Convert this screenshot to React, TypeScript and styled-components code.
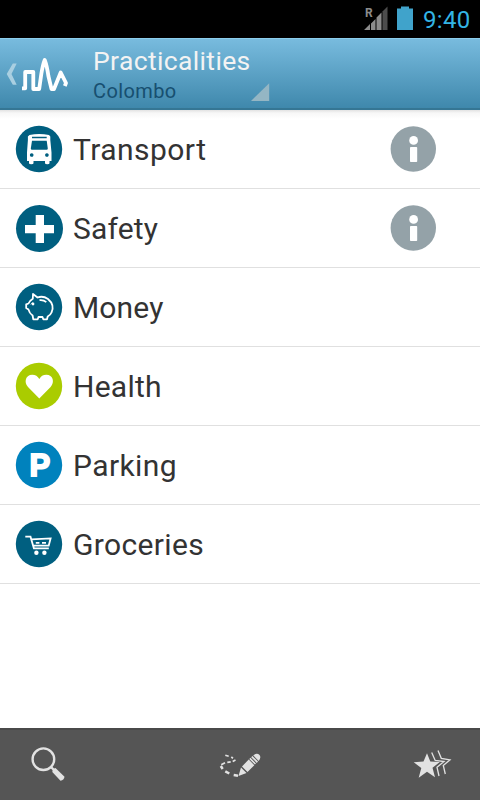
import React from "react";
import styled, { createGlobalStyle } from "styled-components";

const GlobalStyle = createGlobalStyle`
  * { box-sizing: border-box; }
  body { margin: 0; background: #fff; }
  svg { display: block; flex: none; }
`;

const Screen = styled.div`
  width: 480px;
  height: 800px;
  display: flex;
  flex-direction: column;
  overflow: hidden;
  background: #fff;
  font-family: Roboto, sans-serif;
`;

const StatusBar = styled.div`
  height: 38px;
  flex: none;
  display: flex;
  justify-content: flex-end;
  background: #000;
`;

const Clock = styled.span`
  width: 57px;
  padding-top: 5px;
  font-size: 24px;
  line-height: 30px;
  letter-spacing: 0.3px;
  color: #33b5e5;
`;

const ActionBar = styled.header`
  height: 72px;
  flex: none;
  display: flex;
  background: linear-gradient(#78bbde, #3f88ac);
  border-top: 1px solid #8ccdec;
  border-bottom: 2px solid #357694;
`;

const Titles = styled.div`
  width: 158px;
  display: flex;
  flex-direction: column;
`;

const Title = styled.h1`
  margin: 6px 0 0;
  font-size: 26.5px;
  line-height: 32px;
  font-weight: 400;
  letter-spacing: 0.36px;
  white-space: nowrap;
  color: #f3f3f3;
`;

const Subtitle = styled.div`
  margin-top: 1px;
  font-size: 20px;
  line-height: 26px;
  letter-spacing: 0.4px;
  color: #174f70;
`;

const List = styled.main`
  flex: 1;
  display: flex;
  flex-direction: column;
  background: linear-gradient(#e2e2e2, #f7f7f7 3px, #fff 9px);
`;

const Row = styled.div`
  height: 79px;
  flex: none;
  display: flex;
  align-items: center;
  padding: 0 43px 0 15px;
  border-bottom: 1px solid #e0e0e0;
`;

const Label = styled.span<{ $spacing: number }>`
  flex: 1;
  margin-left: 10px;
  padding-top: 2px;
  font-size: 30px;
  line-height: 36px;
  letter-spacing: ${(p) => p.$spacing}px;
  color: #333;
`;

const Toolbar = styled.footer`
  height: 72px;
  flex: none;
  display: flex;
  justify-content: space-between;
  background: #555;
  border-top: 2px solid #4a4a4a;
`;

const BadgeLetter = styled.text`
  font: 700 31px "Liberation Sans", sans-serif;
  fill: #fff;
  stroke: #fff;
  stroke-width: 1.8;
`;

const SignalLetter = styled.text`
  font: 700 12px Roboto, sans-serif;
  fill: #8c8c8c;
`;

const SignalIcon = () => (
  <svg width="34" height="38" viewBox="359 0 34 38">
    <SignalLetter x="365" y="17">R</SignalLetter>
    <path d="M364 30 L370 24 V30Z M371 23.5 L375.5 19 V30 H371Z M376.5 17.5 L381.5 12.5 V30 H376.5Z" fill="#8c8c8c" />
    <path d="M382.5 11.5 L387.5 6.5 V30 H382.5Z" fill="#4c4c4c" />
  </svg>
);

const BatteryIcon = () => (
  <svg width="30" height="38" viewBox="393 0 30 38">
    <path d="M401 6.5h8v2h4V30h-16V8.500h4z" fill="#40a3cb" />
  </svg>
);

const UpAndLogo = () => (
  <svg width="93" height="69" viewBox="0 39 93 69">
    <path d="M12.800 63.500H16.700L11.500 74L16.700 84.700H12.800L6.700 74Z" fill="#a9cfe1" />
    <path
      d="M22 88.300H25.200V72H33.300V89H39.200L41.300 74Q43 64 44.700 60Q47 66 48.400 76L51.500 89H54L60.700 72.500L66 83L64.800 86"
      fill="none"
      stroke="#fff"
      strokeWidth="3.800"
      strokeLinejoin="round"
    />
  </svg>
);

const SpinnerCorner = () => (
  <svg width="20" height="69" viewBox="251 39 20 69">
    <path d="M269.200 83.200V101H251Z" fill="#94b6c4" />
  </svg>
);

const BusArt = () => (
  <>
    <circle cx="24" cy="24" r="23.200" fill="#005f80" />
    <path
      fillRule="evenodd"
      fill="#fff"
      d="M14.500 10Q24 8.200 34 10L35.300 11.500V15L36.500 27.500V36H34.500V38.200Q34.500 39.300 32.300 39.300T30 38.200V36H18.500V38.200Q18.500 39.300 16.300 39.300T14 38.200V36H12V27.500L12.900 15V11.500Z M17 11.800V13.300H31.700V11.800Z M17 15.700L15.800 23.500Q15.800 24.800 17 24.800H31.600Q32.800 24.800 32.800 23.500L31.700 15.700Z M16.700 28.200a1.800 1.800 0 1 0 .01 0Z M31.900 28.200a1.800 1.800 0 1 0 .01 0Z"
    />
  </>
);

const CrossArt = () => (
  <>
    <circle cx="24.500" cy="24.500" r="23.500" fill="#005f80" />
    <path d="M20.700 11H29V21H39V29.300H29V39H20.700V29.300H10V21H20.700Z" fill="#fff" />
  </>
);

const PiggyArt = () => (
  <>
    <circle cx="24" cy="24" r="23.200" fill="#005f80" />
    <path
      d="M18 11L22.500 14.500Q28 12.500 33 16Q40 22 36.500 29.500Q35.500 32 32.700 33.500L32 36.300H28.300L27.500 34H23.500L22.700 36.300H18.300L17.600 32.500Q14.500 30.500 13.500 26.600L11.200 25V21.300L13.500 20.500Q14.600 17.500 17.800 15.700Z"
      fill="none"
      stroke="#fff"
      strokeWidth="1.800"
      strokeLinejoin="round"
    />
    <path d="M24.500 17.200Q28.500 16.700 31.300 19.200" fill="none" stroke="#fff" strokeWidth="1.700" />
    <circle cx="18" cy="21" r="1.400" fill="#fff" />
    <path d="M15.800 21.500L17.500 19.500" stroke="#fff" strokeWidth=".8" />
  </>
);

const HeartArt = () => (
  <>
    <circle cx="24" cy="24" r="23.200" fill="#aacc00" />
    <path d="M24.300 36.500L13 25C8.500 20 10.800 12.800 17.200 12.700Q22 12.700 24.300 17Q26.500 12.700 31.300 12.700C38 12.800 40 20 35.600 25Z" fill="#fff" />
  </>
);

const ParkingArt = () => (
  <>
    <circle cx="24" cy="24" r="23.200" fill="#0082bd" />
    <BadgeLetter x="14.600" y="35.100">P</BadgeLetter>
  </>
);

const CartArt = () => (
  <>
    <circle cx="24" cy="24" r="23.200" fill="#005f80" />
    <path d="M10.300 16.700H15.500L18.900 28.300H33.800M16.400 19.400L35.600 18.400L33.700 25.700H18.200" fill="none" stroke="#fff" strokeWidth="1.800" />
    <path d="M20.800 22.800H24.400M27 22.800H31" stroke="#fff" strokeWidth="1.700" />
    <circle cx="21.400" cy="32.700" r="2.200" fill="#fff" />
    <circle cx="29.400" cy="32.700" r="2.200" fill="#fff" />
  </>
);

const InfoIcon = () => (
  <svg width="48" height="48" viewBox="389 125 48 48">
    <circle cx="413.300" cy="149" r="22.700" fill="#94a2a8" />
    <circle cx="413.600" cy="140.400" r="4.400" fill="#fff" />
    <rect x="410" y="147" width="7.200" height="15" rx=".8" fill="#fff" />
  </svg>
);

const SearchIcon = () => (
  <svg width="96" height="70" viewBox="0 730 96 70">
    <circle cx="43.400" cy="759.200" r="10.800" fill="none" stroke="#e2e2e2" strokeWidth="2.400" />
    <path d="M51 767L55 771" stroke="#e2e2e2" strokeWidth="2.400" />
    <path d="M55.500 768L64.500 776.700Q64 780 60.500 780.700L52.300 772Q52.500 768.500 55.500 768Z" fill="#e2e2e2" />
  </svg>
);

const RouteIcon = () => (
  <svg width="96" height="70" viewBox="192 730 96 70">
    <path
      d="M225.300 755.200L228.700 756.200M231.300 757L233 758.200M235.500 760L232.700 761.400M230.700 761.800L227.300 762.300M225 762.700L221.300 764.700"
      fill="none"
      stroke="#e2e2e2"
      strokeWidth="1.700"
    />
    <path d="M220.800 766L222.700 769M225.300 771.300L229.300 773.500M233.700 775L238 775.800" fill="none" stroke="#e2e2e2" strokeWidth="2.500" />
    <path d="M238.500 776L241 767.500L246.500 773Z M242 766.500L248.700 759.500L254.300 765.200L247.500 772Z M249.300 759L250.500 757.800L256 763.500L254.900 764.600Z M251.200 757.200L252.400 756L258 761.600L256.800 762.900Z M253.200 755.300Q257 752.500 259.500 755Q261.500 757.500 258.700 761Z" fill="#e2e2e2" />
  </svg>
);

const FavouritesIcon = () => (
  <svg width="96" height="70" viewBox="384 730 96 70">
    <path d="M427 753.300L430.300 761.600L439.800 762L432.500 767.800L435 777.300L427 771.800L418.700 777.700L421.300 768L413.700 762.300L423.500 761.600Z" fill="#e2e2e2" />
    <path
      d="M431.700 752.500L435.200 760.500L444 761.500L437 767.200L439 776M438 750.500L441.300 758.300L450 759.800L443.300 765.500L445.300 774"
      fill="none"
      stroke="#e2e2e2"
      strokeWidth="1.300"
    />
  </svg>
);

const items = [
  { label: "Transport", Art: BusArt, info: true, spacing: 0.45 },
  { label: "Safety", Art: CrossArt, info: true, spacing: 0.15 },
  { label: "Money", Art: PiggyArt, info: false, spacing: 0.15 },
  { label: "Health", Art: HeartArt, info: false, spacing: 0.25 },
  { label: "Parking", Art: ParkingArt, info: false, spacing: 0.4 },
  { label: "Groceries", Art: CartArt, info: false, spacing: 0.35 },
];

export default function App() {
  return (
    <>
      <GlobalStyle />
      <Screen>
        <StatusBar>
          <SignalIcon />
          <BatteryIcon />
          <Clock>9:40</Clock>
        </StatusBar>
        <ActionBar>
          <UpAndLogo />
          <Titles>
            <Title>Practicalities</Title>
            <Subtitle>Colombo</Subtitle>
          </Titles>
          <SpinnerCorner />
        </ActionBar>
        <List>
          {items.map(({ label, Art, info, spacing }) => (
            <Row key={label}>
              <svg width="48" height="48" viewBox="0 0 48 48">
                <Art />
              </svg>
              <Label $spacing={spacing}>{label}</Label>
              {info && <InfoIcon />}
            </Row>
          ))}
        </List>
        <Toolbar>
          <SearchIcon />
          <RouteIcon />
          <FavouritesIcon />
        </Toolbar>
      </Screen>
    </>
  );
}
